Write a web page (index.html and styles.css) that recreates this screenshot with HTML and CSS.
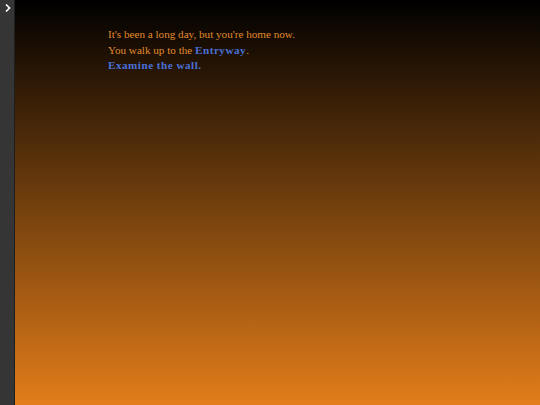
FILE: index.html
```html
<!DOCTYPE html>
<html>
<head>
<meta charset="utf-8">
<link rel="stylesheet" href="styles.css">
</head>
<body>
<div class="app">
  <aside class="sidebar">
    <svg class="chev" width="6" height="8" viewBox="0 0 6 8"><path d="M1 0.5 L4.5 4 L1 7.5" fill="none" stroke="#fff" stroke-width="1.6"/></svg>
  </aside>
  <main class="story">
    <div class="passage">
      <p>It's been a long day, but you're home now.</p>
      <p>You walk up to the <a class="link">Entryway</a>.</p>
      <p><a class="link">Examine the wall.</a></p>
    </div>
  </main>
</div>
</body>
</html>
```
FILE: styles.css
```css
html, body { margin: 0; padding: 0; height: 100%; }
.app { display: flex; height: 405px; width: 540px; }
.sidebar {
  width: 14px;
  background: #353535;
  border-right: 1px solid #1e1e1e;
  display: flex;
  justify-content: center;
  align-items: flex-start;
}
.chev { margin-top: 4px; margin-left: 1px; }
.story {
  flex: 1;
  background: linear-gradient(to bottom, #000 0%, #e27d1a 100%);
}
.passage {
  padding: 27px 0 0 93px;
  font-family: "Liberation Serif", serif;
  font-size: 11.15px;
  line-height: 15.5px;
  color: #e08a2c;
}
.passage p { margin: 0; }
.link { color: #4a70d6; font-weight: bold; letter-spacing: 0.5px; cursor: pointer; }
```
